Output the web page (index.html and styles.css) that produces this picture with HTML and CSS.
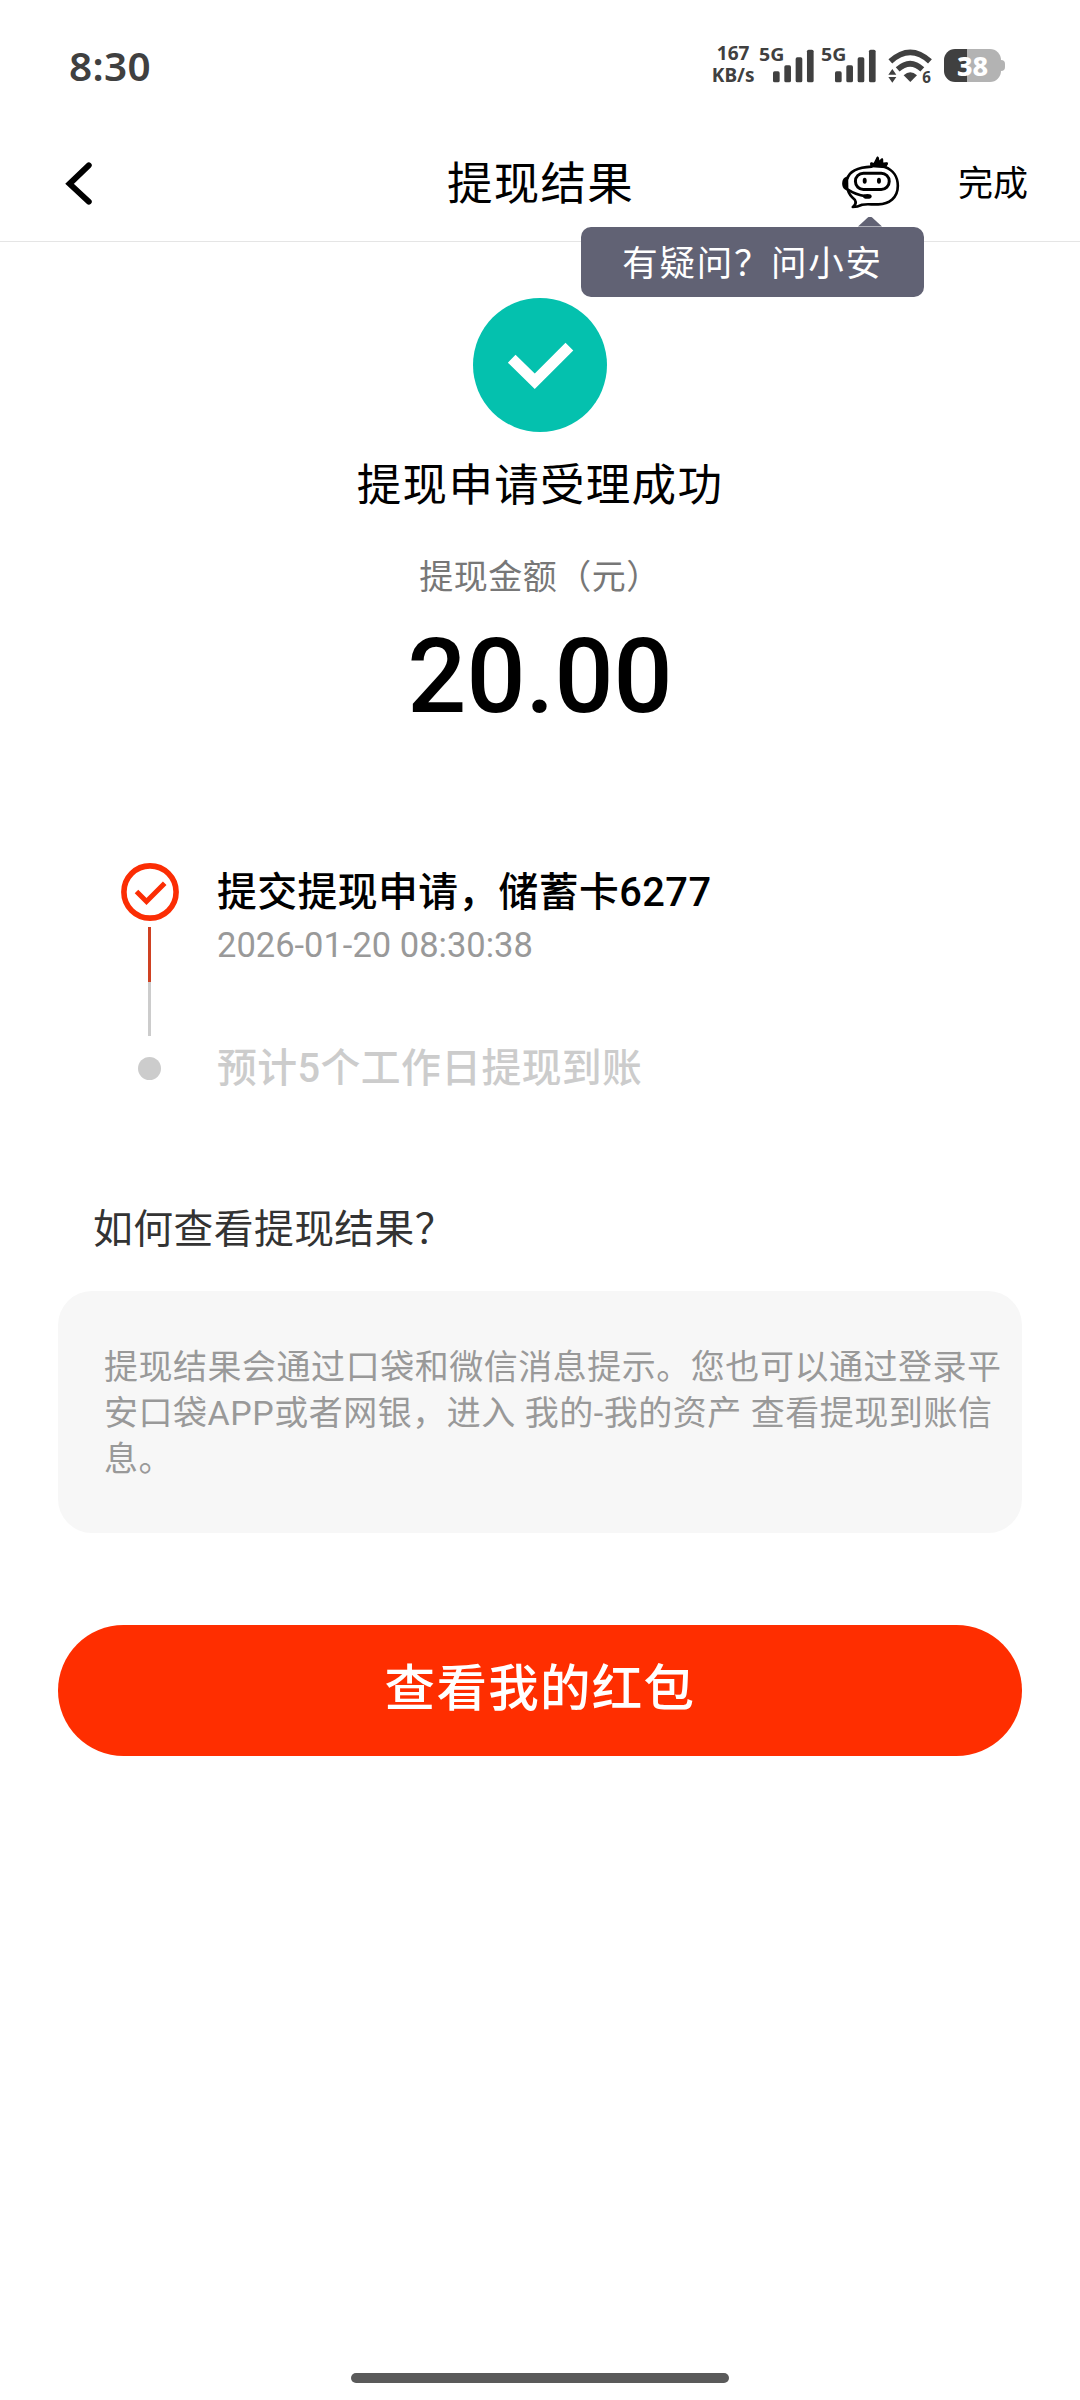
FILE: index.html
```
<!DOCTYPE html>
<html lang="zh-CN">
<head>
<meta charset="UTF-8">
<title>提现结果</title>
<link rel="stylesheet" href="styles.css">
</head>
<body>
<div class="status-bar">
    <div class="time">8:30</div>
    <div class="status-icons">
        <div class="speed"><span>167</span><span>KB/s</span></div>
        <svg class="signal" viewBox="0 0 166 110">
            <text x="0" y="39" textLength="76" lengthAdjust="spacingAndGlyphs">5G</text>
            <rect x="42" y="70" width="20" height="33" rx="5"/>
            <rect x="76" y="52" width="20" height="51" rx="5"/>
            <rect x="110" y="28" width="20" height="75" rx="5"/>
            <rect x="144" y="5" width="20" height="98" rx="5"/>
        </svg>
        <svg class="signal" viewBox="0 0 166 110">
            <text x="0" y="39" textLength="76" lengthAdjust="spacingAndGlyphs">5G</text>
            <rect x="42" y="70" width="20" height="33" rx="5"/>
            <rect x="76" y="52" width="20" height="51" rx="5"/>
            <rect x="110" y="28" width="20" height="75" rx="5"/>
            <rect x="144" y="5" width="20" height="98" rx="5"/>
        </svg>
        <svg class="wifi" viewBox="0 0 136 110">
            <path class="arc" d="M7 40 Q67 -14 126 40"/>
            <path class="arc" d="M29 64 Q67 30 103 64"/>
            <path d="M47 82 Q67 64 87 82 L67 102 Z"/>
            <path d="M1 80 L13 63 L25 80 Z M1 87 L25 87 L13 104 Z"/>
            <text x="103" y="104" textLength="26" lengthAdjust="spacingAndGlyphs">6</text>
        </svg>
        <div class="battery"><span>38</span></div>
    </div>
</div>

<div class="header">
    <div class="back">
        <svg viewBox="0 0 80 130"><path d="M71 10 L13 66 L71 120"/></svg>
    </div>
    <h1>提现结果</h1>
    <div class="actions">
        <div class="service">
            <svg class="robot" viewBox="846 46 174 160">
                <path class="line" d="M861 116 C867 93 891 80 935 78 L934 69 L943 72 L953 52 L956 68 L966 57 L966 71 L980 69 L975 79 C1000 88 1014 110 1014 136 C1014 172 988 192 955 192 C938 193 920 190 906 193 C898 197 889 200 878 200 C887 194 889 187 884 178 C873 169 866 161 863 148"/>
                <path d="M864 108 C850 109 846 119 846 129 C846 141 852 149 865 151 Z"/>
                <path d="M935 80 L934 66 L944 71 L952 47 L957 63 L968 52 L969 66 L985 66 L977 83 Z"/>
                <path class="line" d="M862 147 C880 159 896 165 916 167"/>
                <ellipse cx="922" cy="168" rx="13" ry="7"/>
                <rect class="line visor" x="886" y="98" width="102" height="49" rx="24"/>
                <ellipse cx="914" cy="121" rx="6" ry="9"/>
                <ellipse cx="957" cy="121" rx="6" ry="9"/>
            </svg>
            <div class="tip">有疑问？问小安</div>
        </div>
        <div class="done">完成</div>
    </div>
</div>

<div class="result">
    <svg class="ok" viewBox="0 0 134 134">
        <circle cx="67" cy="67" r="67"/>
        <path d="M38.7 60.8 L61.7 83.3 L96.4 48.7"/>
    </svg>
    <h2>提现申请受理成功</h2>
    <div class="label">提现金额（元）</div>
    <div class="amount">20.00</div>
</div>

<div class="steps">
    <div class="step">
        <div class="marker">
            <svg viewBox="0 0 58 58">
                <circle cx="29" cy="29" r="26.1"/>
                <path d="M15.5 28.5 L25.5 38.5 L43.7 20.2"/>
            </svg>
            <div class="bar"></div>
        </div>
        <div class="text">
            <div class="name">提交提现申请，储蓄卡6277</div>
            <div class="date">2026-01-20 08:30:38</div>
        </div>
    </div>
    <div class="step pending">
        <div class="marker"><div class="dot"></div></div>
        <div class="name">预计5个工作日提现到账</div>
    </div>
</div>

<h3>如何查看提现结果？</h3>
<div class="notice">提现结果会通过口袋和微信消息提示。您也可以通过登录平安口袋APP或者网银，进入 我的-我的资产 查看提现到账信息。</div>
<div class="button">查看我的红包</div>

<div class="home-bar"></div>
</body>
</html>
```

FILE: styles.css
```
* {
  box-sizing: border-box;
}

body {
  margin: 0;
  width: 1080px;
  height: 2400px;
  display: flex;
  flex-direction: column;
  background: #fff;
  color: #000;
  font-family: Roboto, "Noto Sans CJK SC", sans-serif;
}

h1, h2, h3 {
  margin: 0;
  font-weight: 400;
}

.status-bar {
  height: 126px;
  padding: 0 79px 0 69px;
  display: flex;
  justify-content: space-between;
  color: #404040;
  font-family: "Noto Sans", sans-serif;
}

.time {
  margin-top: 41px;
  font-size: 40.5px;
  font-weight: 600;
  line-height: 50px;
  letter-spacing: .3px;
}

.status-icons {
  margin-top: 45px;
  height: 40px;
  display: flex;
}

.speed {
  width: 44px;
  margin-right: 4px;
  display: flex;
  flex-direction: column;
  align-items: center;
  font-size: 19px;
  font-weight: 700;
  line-height: 22px;
  margin-top: -3px;
}

.signal {
  width: 55.3px;
  height: 36.7px;
  margin: 3px 7px 0 0;
  fill: #404040;
  font-size: 54px;
  font-weight: 700;
  overflow: visible;
}

.wifi {
  width: 45.3px;
  height: 36.7px;
  margin: 3px 11px 0 4px;
  fill: #404040;
  font-size: 47px;
  font-weight: 700;
  overflow: visible;
}

.arc {
  fill: none;
  stroke: #404040;
  stroke-width: 17;
}

.battery {
  width: 57px;
  height: 33px;
  margin-top: 4px;
  border-radius: 11px;
  background: linear-gradient(to right, #404040 23px, #b3b3b3 23px);
  color: #fff;
  font-size: 27px;
  font-weight: 800;
  line-height: 33px;
  text-align: center;
  position: relative;
}
.battery::after {
  content: "";
  position: absolute;
  left: 57px;
  top: 11px;
  width: 4px;
  height: 11px;
  border-radius: 0 4px 4px 0;
  background: #b3b3b3;
}

.header {
  height: 116px;
  padding: 0 52px 0 65px;
  border-bottom: 1px solid #e5e5e5;
  display: grid;
  grid-template-columns: 1fr auto 1fr;
  align-items: center;
}

.back svg {
  display: block;
  width: 27px;
  height: 43px;
  fill: none;
  stroke: #000;
  stroke-width: 18;
  stroke-linecap: round;
}

.header h1 {
  font-size: 45.5px;
  letter-spacing: 1.3px;
  line-height: 60px;
  margin-left: -12px;
  padding-top: 3px;
}

.actions {
  display: flex;
  justify-content: flex-end;
  align-items: center;
}

.service {
  position: relative;
  margin: -3px 58px 0 0;
}

.robot {
  display: block;
  width: 58px;
  height: 53px;
}
.robot .line {
  fill: none;
  stroke: #000;
  stroke-width: 8;
  stroke-linejoin: round;
}
.robot .visor {
  stroke-width: 9;
}

.tip {
  position: absolute;
  top: 71px;
  right: -24px;
  width: 343px;
  height: 70px;
  border-radius: 10px;
  background: #616274;
  color: #fff;
  font-size: 35.5px;
  letter-spacing: 1.7px;
  line-height: 74px;
  text-align: center;
  white-space: nowrap;
}
.tip::before {
  content: "";
  position: absolute;
  left: 277px;
  top: -10px;
  width: 24px;
  height: 10px;
  background: #616274;
  clip-path: polygon(0 100%, 42% 8%, 50% 0, 58% 8%, 100% 100%);
}

.done {
  padding-top: 3px;
  font-size: 35px;
  line-height: 46px;
}

.result {
  padding-top: 56px;
  display: flex;
  flex-direction: column;
  align-items: center;
}

.ok {
  width: 134px;
  height: 134px;
  fill: #04c1ae;
}
.ok path {
  fill: none;
  stroke: #fff;
  stroke-width: 11;
}

.result h2 {
  margin-top: 24px;
  font-size: 44.5px;
  letter-spacing: 1.3px;
  line-height: 60px;
}

.label {
  margin-top: 36px;
  color: #777;
  font-size: 34px;
  letter-spacing: .5px;
  line-height: 50px;
}

.amount {
  margin-top: 15px;
  font-size: 104px;
  font-weight: 500;
  line-height: 120px;
}

.steps {
  margin-top: 126px;
  padding-left: 121px;
}

.step {
  display: flex;
  gap: 38px;
}

.marker {
  width: 58px;
  display: flex;
  flex-direction: column;
  align-items: center;
}
.marker svg {
  width: 58px;
  height: 58px;
  fill: none;
  stroke: #fb2d04;
  stroke-width: 5.6;
}
.marker path {
  stroke-width: 5;
}

.bar {
  width: 3px;
  height: 109px;
  margin: 6px 1px 0 0;
  background: linear-gradient(#cf4122 55px, #ccc 55px);
}

.dot {
  width: 23px;
  height: 23px;
  margin-right: 1px;
  border-radius: 50%;
  background: #ccc;
}

.name {
  font-size: 39.8px;
  font-weight: 500;
  letter-spacing: .43px;
  line-height: 60px;
}

.date {
  color: #999;
  font-size: 34.5px;
  line-height: 45px;
}

.pending {
  margin-top: 2px;
  height: 60px;
  align-items: center;
  color: #ccc;
}
.pending .name {
  padding-top: 2px;
}

h3 {
  margin: 102px 0 0 93px;
  color: #333;
  font-size: 39.8px;
  letter-spacing: .43px;
  line-height: 60px;
}

.notice {
  width: 964px;
  height: 242px;
  margin: 31px 0 0 58px;
  padding: 53px 10px 0 46px;
  border-radius: 34px;
  background: #f7f7f7;
  color: #999;
  font-size: 34px;
  letter-spacing: .52px;
  line-height: 46px;
}

.button {
  width: 964px;
  height: 131px;
  margin: 92px 0 0 58px;
  border-radius: 66px;
  background: #ff2e00;
  color: #fff;
  font-size: 50.5px;
  font-weight: 500;
  letter-spacing: 1.3px;
  line-height: 128px;
  text-align: center;
}

.home-bar {
  width: 378px;
  height: 10px;
  margin: auto auto 17px;
  border-radius: 5px;
  background: #5a5a5a;
}
```
